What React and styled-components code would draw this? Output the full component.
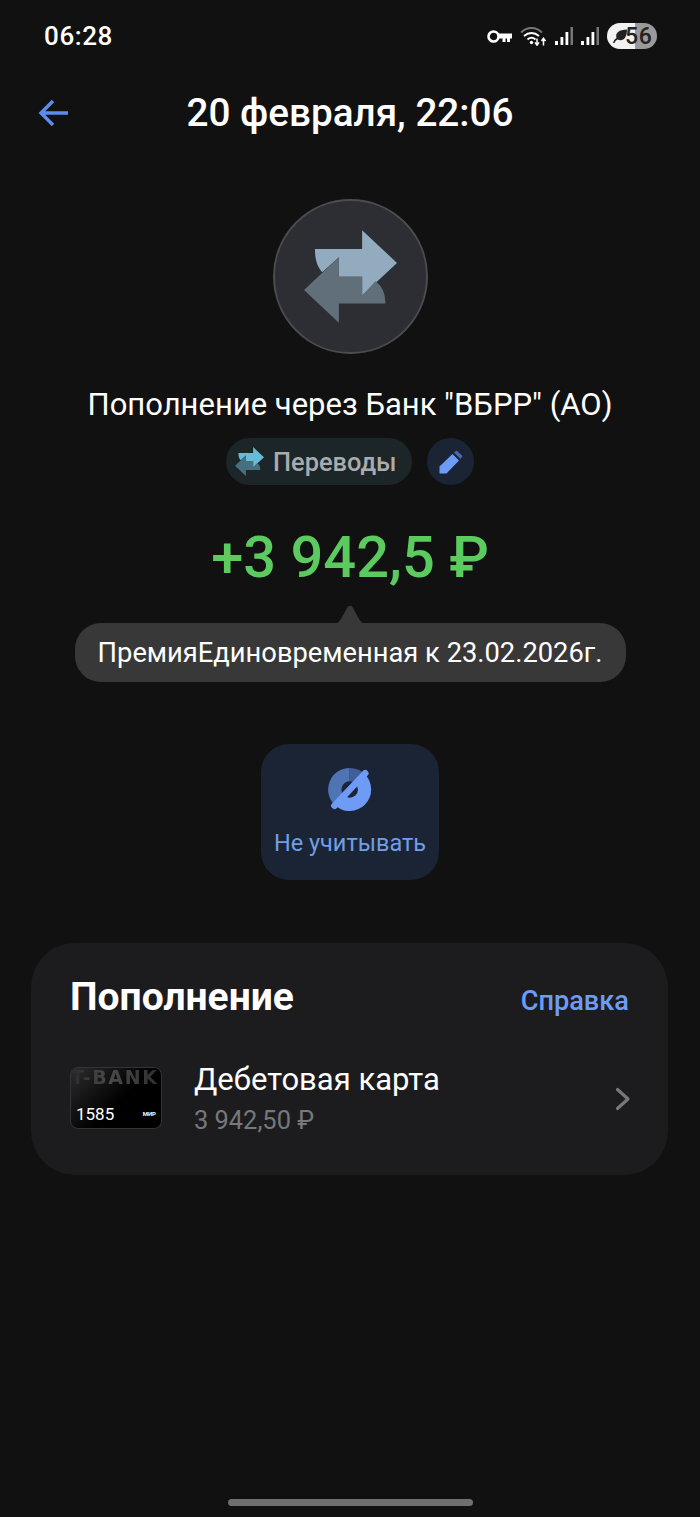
import styled, { createGlobalStyle } from 'styled-components';

const GlobalStyle = createGlobalStyle`
  html, body {
    margin: 0;
    padding: 0;
    background: #111112;
  }
  * {
    box-sizing: border-box;
  }
`;

const KeyIcon = () => (
  <svg width="25" height="13" viewBox="0 0 25 13">
    <circle cx="6.500" cy="6.500" r="5" fill="none" stroke="#fff" strokeWidth="2.600" />
    <path d="M11 3.500h14v5h-2v3.500h-3V8.500h-1.500V12h-3V8.500H11z" fill="#fff" />
  </svg>
);

const WifiIcon = () => (
  <svg width="27" height="20" viewBox="0 0 27 20">
    <path d="M1 6.500C7 0.500 16 0.500 22 6.500" fill="none" stroke="#777" strokeWidth="1.800" />
    <path d="M4 10C8.500 6 14.500 6 19 10" fill="none" stroke="#fff" strokeWidth="1.800" />
    <path d="M7.500 13.500c2.500-2.200 5.500-2.200 8 0" fill="none" stroke="#fff" strokeWidth="1.800" />
    <circle cx="11.500" cy="16.500" r="1.700" fill="#fff" />
    <path d="M17 12.500v6M15 16.400l2 2.800 2-2.800" fill="none" stroke="#fff" strokeWidth="1.500" />
    <path d="M23.500 19.500v-7M21.500 15l2-2.800 2 2.800" fill="none" stroke="#fff" strokeWidth="1.500" />
  </svg>
);

const SignalIcon = () => (
  <svg width="18" height="18" viewBox="0 0 18 18">
    <rect x="0" y="14" width="3" height="4" fill="#fff" />
    <rect x="5.500" y="10" width="2.800" height="8" fill="#fff" />
    <rect x="10.500" y="5" width="2.800" height="13" fill="#fff" />
    <rect x="15.500" y="0" width="2.500" height="18" fill="#777" />
  </svg>
);

const LeafIcon = () => (
  <svg width="16" height="16" viewBox="0 0 16 16">
    <path d="M1 15C2 12 3 11 4.500 10 3 5 7 1.500 15 1.500 15 10 11 14 5.500 11.500 4 12.500 3 13.500 2.500 15z" fill="#222" />
  </svg>
);

const TransferIcon = ({ size, top, bottom }) => (
  <svg width={size} height={size} viewBox="160 152 280 278">
    <path d="M193 208H335V152L440 250 335 348V292H265V233L215 278C200 262 193 240 193 208z" fill={top} />
    <path d="M265 233L160 332 265 430V372H405C405 340 395 320 375 305L335 348V292H265z" fill={bottom} />
  </svg>
);

const PencilIcon = () => (
  <svg width="24" height="24" viewBox="0 0 24 24">
    <path d="M0.500 23.500V16.500L13.500 4 20 10.500 7.500 23.500z" fill="#6e9bf5" />
    <path d="M15 2.500L17.500 0.500 23.500 6 21.500 9z" fill="#4a6aa8" />
  </svg>
);

const SkipIcon = () => (
  <svg width="44" height="43" viewBox="233 100 132 130">
    <path d="M298 165L252 211A65 65 0 0 1 298 100z" fill="#4f74b5" />
    <path d="M298 165V100A65 65 0 0 1 344 119z" fill="#3f5f96" />
    <path d="M298 165L344 119A65 65 0 0 1 252 211z" fill="#6e9bf5" />
    <circle cx="298" cy="165" r="25" fill="#1b2435" />
    <path d="M252 214L345 116" fill="none" stroke="#6e9bf5" strokeWidth="20" strokeLinecap="round" />
  </svg>
);

const ChevronIcon = () => (
  <svg width="16" height="24" viewBox="0 0 16 24">
    <path d="M2.500 2.500L13 12 2.500 21.500" fill="none" stroke="#77787c" strokeWidth="3.200" strokeLinecap="round" strokeLinejoin="round" />
  </svg>
);

const App = () => (
  <Page>
    <GlobalStyle />
    <StatusBar>
      <Clock>06:28</Clock>
      <StatusIcons>
        <KeyIcon />
        <WifiIcon />
        <SignalIcon />
        <SignalIcon />
        <Battery>
          <LeafIcon />
          <BatteryLevel>56</BatteryLevel>
        </Battery>
      </StatusIcons>
    </StatusBar>

    <Header>
      <BackButton>
        <svg width="32" height="30" viewBox="0 0 32 30">
          <path d="M30 15H3M15 3L3 15l12 12" fill="none" stroke="#5b8def" strokeWidth="3.400" />
        </svg>
      </BackButton>
      <Title>20 февраля, 22:06</Title>
    </Header>

    <Hero>
      <Avatar>
        <TransferIcon size={93} top="#93abbe" bottom="#616f7b" />
      </Avatar>
      <Merchant>Пополнение через Банк "ВБРР" (АО)</Merchant>
      <ChipRow>
        <CategoryChip>
          <TransferIcon size={29} top="#66bbd8" bottom="#47707f" />
          Переводы
        </CategoryChip>
        <EditButton>
          <PencilIcon />
        </EditButton>
      </ChipRow>
      <Amount>+3 942,5 ₽</Amount>
      <Tooltip>ПремияЕдиновременная к 23.02.2026г.</Tooltip>
      <ActionButton>
        <SkipIcon />
        <ActionLabel>Не учитывать</ActionLabel>
      </ActionButton>
    </Hero>

    <Card>
      <CardHead>
        <CardTitle>Пополнение</CardTitle>
        <HelpLink>Справка</HelpLink>
      </CardHead>
      <AccountRow>
        <BankCard>
          <BankName>T-BANK</BankName>
          <CardFoot>
            <span>1585</span>
            <Mir>МИР</Mir>
          </CardFoot>
        </BankCard>
        <AccountInfo>
          <AccountName>Дебетовая карта</AccountName>
          <AccountSum>3 942,50 ₽</AccountSum>
        </AccountInfo>
        <ChevronIcon />
      </AccountRow>
    </Card>

    <HomeBar />
  </Page>
);

const Page = styled.div`
  width: 700px;
  height: 1517px;
  background: #111112;
  color: #fff;
  font-family: Roboto, 'Liberation Sans', sans-serif;
  display: flex;
  flex-direction: column;
  overflow: hidden;
`;

const StatusBar = styled.div`
  height: 72px;
  padding: 0 43px 0 44px;
  display: flex;
  align-items: center;
  justify-content: space-between;
`;

const Clock = styled.div`
  font-size: 26px;
  font-weight: 500;
  letter-spacing: 0.6px;
`;

const StatusIcons = styled.div`
  display: flex;
  align-items: center;
  gap: 8px;
`;

const Battery = styled.div`
  width: 50px;
  height: 26px;
  padding-left: 5px;
  border-radius: 13px;
  background: linear-gradient(90deg, #f2f2f2 0 56%, #9a9a9a 56% 100%);
  color: #222;
  display: flex;
  align-items: center;
`;

const BatteryLevel = styled.span`
  margin-left: -3px;
  font-size: 23px;
  font-weight: 500;
  letter-spacing: 0.6px;
`;

const Header = styled.div`
  position: relative;
  height: 82px;
  padding-bottom: 2px;
  display: flex;
  align-items: center;
  justify-content: center;
`;

const BackButton = styled.div`
  position: absolute;
  left: 38px;
  top: 26px;
`;

const Title = styled.div`
  font-size: 38.700px;
  font-weight: 500;
`;

const Hero = styled.div`
  display: flex;
  flex-direction: column;
  align-items: center;
`;

const Avatar = styled.div`
  width: 155px;
  height: 155px;
  margin-top: 45px;
  border-radius: 50%;
  background: #2d2e33;
  border: 2px solid #4b4c50;
  display: flex;
  align-items: center;
  justify-content: center;
`;

const Merchant = styled.div`
  margin-top: 33px;
  font-size: 31px;
  line-height: 36px;
`;

const ChipRow = styled.div`
  margin-top: 15px;
  display: flex;
  gap: 15px;
`;

const CategoryChip = styled.div`
  width: 186px;
  height: 47px;
  padding-left: 9px;
  border-radius: 24px;
  background: #1c2528;
  color: #a9abae;
  font-size: 25.400px;
  font-weight: 500;
  display: flex;
  align-items: center;
  gap: 9px;
`;

const EditButton = styled.div`
  width: 47px;
  height: 47px;
  border-radius: 50%;
  background: #1b2435;
  display: flex;
  align-items: center;
  justify-content: center;
`;

const Amount = styled.div`
  margin-top: 39px;
  font-size: 57.800px;
  line-height: 66px;
  font-weight: 500;
  color: #5ccb5f;
`;

const Tooltip = styled.div`
  position: relative;
  width: 551px;
  height: 59px;
  margin-top: 33px;
  border-radius: 26px;
  background: #383838;
  font-size: 27.300px;
  display: flex;
  align-items: center;
  justify-content: center;

  &::before {
    content: '';
    position: absolute;
    left: 50%;
    top: -18px;
    margin-left: -19px;
    width: 38px;
    height: 19px;
    background: #383838;
    clip-path: path('M0 19 C6 19 8 17 10 14 L16 3 C18 0 20 0 22 3 L28 14 C30 17 32 19 38 19 Z');
  }
`;

const ActionButton = styled.div`
  width: 178px;
  height: 136px;
  margin-top: 62px;
  border-radius: 28px;
  background: #1b2435;
  padding-top: 24px;
  display: flex;
  flex-direction: column;
  align-items: center;
  gap: 18px;
`;

const ActionLabel = styled.div`
  color: #6f9fe8;
  font-size: 23.500px;
`;

const Card = styled.div`
  width: 637px;
  height: 232px;
  margin: 63px 0 0 31px;
  padding: 31px 39px 0;
  border-radius: 44px;
  background: #1c1c1e;
`;

const CardHead = styled.div`
  display: flex;
  align-items: baseline;
  justify-content: space-between;
`;

const CardTitle = styled.div`
  font-size: 39px;
  font-weight: 700;
`;

const HelpLink = styled.div`
  font-size: 27.200px;
  font-weight: 500;
  color: #6e9bf5;
`;

const AccountRow = styled.div`
  margin-top: 41px;
  margin-right: -2px;
  display: flex;
  align-items: center;
`;

const BankCard = styled.div`
  width: 92px;
  height: 62px;
  margin-bottom: 2px;
  border-radius: 8px;
  background: linear-gradient(135deg, #2c2c2e 0%, #000 55%);
  border: 1px solid #333;
  position: relative;
  display: flex;
  align-items: flex-end;
`;

const BankName = styled.div`
  position: absolute;
  left: 0;
  top: -2px;
  font-family: 'DejaVu Sans', sans-serif;
  font-size: 19px;
  font-weight: 700;
  letter-spacing: 1.600px;
  white-space: nowrap;
  background: linear-gradient(90deg, #2b2b2c, #4a4a4c 45%, #2f2f31);
  -webkit-background-clip: text;
  background-clip: text;
  color: transparent;
`;

const CardFoot = styled.div`
  width: 100%;
  padding: 0 5px 4px 5px;
  font-size: 17px;
  display: flex;
  align-items: center;
  justify-content: space-between;
`;

const Mir = styled.span`
  font-size: 6px;
  font-weight: 700;
`;

const AccountInfo = styled.div`
  flex: 1;
  margin-left: 32px;
`;

const AccountName = styled.div`
  font-size: 31px;
  line-height: 38px;
`;

const AccountSum = styled.div`
  margin-top: 5px;
  font-size: 25.400px;
  line-height: 32px;
  color: #77787c;
`;

const HomeBar = styled.div`
  width: 245px;
  height: 7px;
  margin: 324px auto 0;
  border-radius: 4px;
  background: #6f6f71;
`;

export default App;
